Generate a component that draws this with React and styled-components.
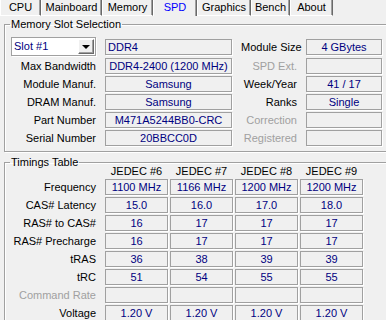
import React from "react";
import styled, { createGlobalStyle } from "styled-components";

const Global = createGlobalStyle`
  html, body { margin: 0; padding: 0; background: #f0f0f0; overflow: hidden; }
  body { font-family: "Liberation Sans", Arial, sans-serif; font-size: 11px; color: #000; }
`;

const Window = styled.div`
  width: 398px;
  height: 320px;
  overflow: hidden;
  background: #f0f0f0;
  display: flex;
  flex-direction: column;
`;

const TabStrip = styled.div`
  display: flex;
  align-items: flex-start;
  height: 16px;
  flex: none;
`;

const Tab = styled.div`
  box-sizing: border-box;
  width: ${(p) => p.$w}px;
  height: 16px;
  line-height: 14px;
  text-align: center;
  border-left: 1px solid #ffffff;
  border-right: 1px solid #696969;
  box-shadow: inset -1px 0 0 #a0a0a0;
  border-bottom: ${(p) => (p.$active ? "none" : "1px solid #ffffff")};
  color: ${(p) => (p.$active ? "#0000ff" : "#000")};
  white-space: nowrap;
`;

const Panel = styled.div`
  padding: 1px 0 0 4px;
  display: flex;
  flex-direction: column;
  gap: 5px;
`;

const Group = styled.fieldset`
  margin: 0;
  min-width: 0;
  width: 392px;
  box-sizing: border-box;
  border: 1px solid #a0a0a0;
  box-shadow: 1px 1px 0 #ffffff, inset 1px 1px 0 #ffffff;
  padding: 0 0 5px 6px;
`;

const Legend = styled.legend`
  padding: 0 1px;
  margin-left: -1px;
  line-height: ${(p) => p.$lh}px;
  white-space: nowrap;
`;

const SlotGrid = styled.div`
  display: grid;
  grid-template-columns: 85px 127px 56px 76px;
  grid-template-rows: 19px repeat(5, 16px);
  column-gap: 9px;
  row-gap: 2px;
  align-items: center;
  padding-top: 6px;
`;

const Label = styled.div`
  text-align: right;
  white-space: nowrap;
  line-height: 14px;
  color: ${(p) => (p.$disabled ? "#a0a0a0" : "#000")};
`;

const TimingLabel = styled(Label)`
  box-sizing: border-box;
  padding-right: 7px;
`;

const Field = styled.div`
  box-sizing: border-box;
  height: 16px;
  border: 1px solid #a0a0a0;
  box-shadow: 1px 1px 0 #ffffff;
  line-height: 14px;
  padding: 0 2px;
  text-align: ${(p) => p.$align || "center"};
  color: #000080;
  white-space: nowrap;
  overflow: hidden;
`;

const Combo = styled.div`
  box-sizing: border-box;
  height: 19px;
  display: flex;
  align-items: stretch;
  background: #ffffff;
  border: 1px solid #a0a0a0;
  box-shadow: 1px 1px 0 #ffffff;
`;

const ComboText = styled.div`
  flex: 1;
  padding-left: 2px;
  line-height: 17px;
  color: #000080;
  white-space: nowrap;
`;

const ComboButton = styled.div`
  box-sizing: border-box;
  width: 16px;
  margin: 1px;
  background: #f0f0f0;
  border-top: 1px solid #ffffff;
  border-left: 1px solid #ffffff;
  border-right: 1px solid #696969;
  border-bottom: 1px solid #696969;
  box-shadow: inset -1px -1px 0 #a0a0a0;
  display: flex;
  align-items: center;
  justify-content: center;
`;

const Arrow = styled.div`
  width: 0;
  height: 0;
  border-left: 4px solid transparent;
  border-right: 4px solid transparent;
  border-top: 4px solid #000;
  margin-right: 1px;
`;

const TimingGrid = styled.div`
  display: grid;
  grid-template-columns: 92px repeat(4, 63px);
  grid-template-rows: 10px repeat(8, 16px);
  column-gap: 2px;
  row-gap: 2px;
  align-items: center;
`;

const Head = styled.div`
  text-align: center;
  line-height: 12px;
  margin-top: -3px;
  white-space: nowrap;
`;

const tabs = [
  ["CPU", 41],
  ["Mainboard", 61],
  ["Memory", 51],
  ["SPD", 44, true],
  ["Graphics", 54],
  ["Bench", 39],
  ["About", 43],
];

const slotRows = [
  ["Max Bandwidth", "DDR4-2400 (1200 MHz)", "SPD Ext.", "", true],
  ["Module Manuf.", "Samsung", "Week/Year", "41 / 17", false],
  ["DRAM Manuf.", "Samsung", "Ranks", "Single", false],
  ["Part Number", "M471A5244BB0-CRC", "Correction", "", true],
  ["Serial Number", "20BBCC0D", "Registered", "", true],
];

const timings = [
  ["Frequency", ["1100 MHz", "1166 MHz", "1200 MHz", "1200 MHz"]],
  ["CAS# Latency", ["15.0", "16.0", "17.0", "18.0"]],
  ["RAS# to CAS#", ["16", "17", "17", "17"]],
  ["RAS# Precharge", ["16", "17", "17", "17"]],
  ["tRAS", ["36", "38", "39", "39"]],
  ["tRC", ["51", "54", "55", "55"]],
  ["Command Rate", ["", "", "", ""], true],
  ["Voltage", ["1.20 V", "1.20 V", "1.20 V", "1.20 V"]],
];

export default function App() {
  return (
    <Window>
      <Global />
      <TabStrip>
        {tabs.map(([t, w, a]) => (
          <Tab key={t} $w={w} $active={a}>
            {t}
          </Tab>
        ))}
      </TabStrip>
      <Panel>
        <Group>
          <Legend $lh={14}>Memory Slot Selection</Legend>
          <SlotGrid>
            <Combo>
              <ComboText>Slot #1</ComboText>
              <ComboButton>
                <Arrow />
              </ComboButton>
            </Combo>
            <Field $align="left">DDR4</Field>
            <Label>Module Size</Label>
            <Field>4 GBytes</Field>
            {slotRows.map(([l, v, l2, v2, dis]) => (
              <React.Fragment key={l}>
                <Label>{l}</Label>
                <Field>{v}</Field>
                <Label $disabled={dis}>{l2}</Label>
                <Field>{v2}</Field>
              </React.Fragment>
            ))}
          </SlotGrid>
        </Group>
        <Group>
          <Legend $lh={10}>Timings Table</Legend>
          <TimingGrid>
            <div />
            <Head>JEDEC #6</Head>
            <Head>JEDEC #7</Head>
            <Head>JEDEC #8</Head>
            <Head>JEDEC #9</Head>
            {timings.map(([l, vals, dis]) => (
              <React.Fragment key={l}>
                <TimingLabel $disabled={dis}>{l}</TimingLabel>
                {vals.map((v, i) => (
                  <Field key={i}>{v}</Field>
                ))}
              </React.Fragment>
            ))}
          </TimingGrid>
        </Group>
      </Panel>
    </Window>
  );
}
